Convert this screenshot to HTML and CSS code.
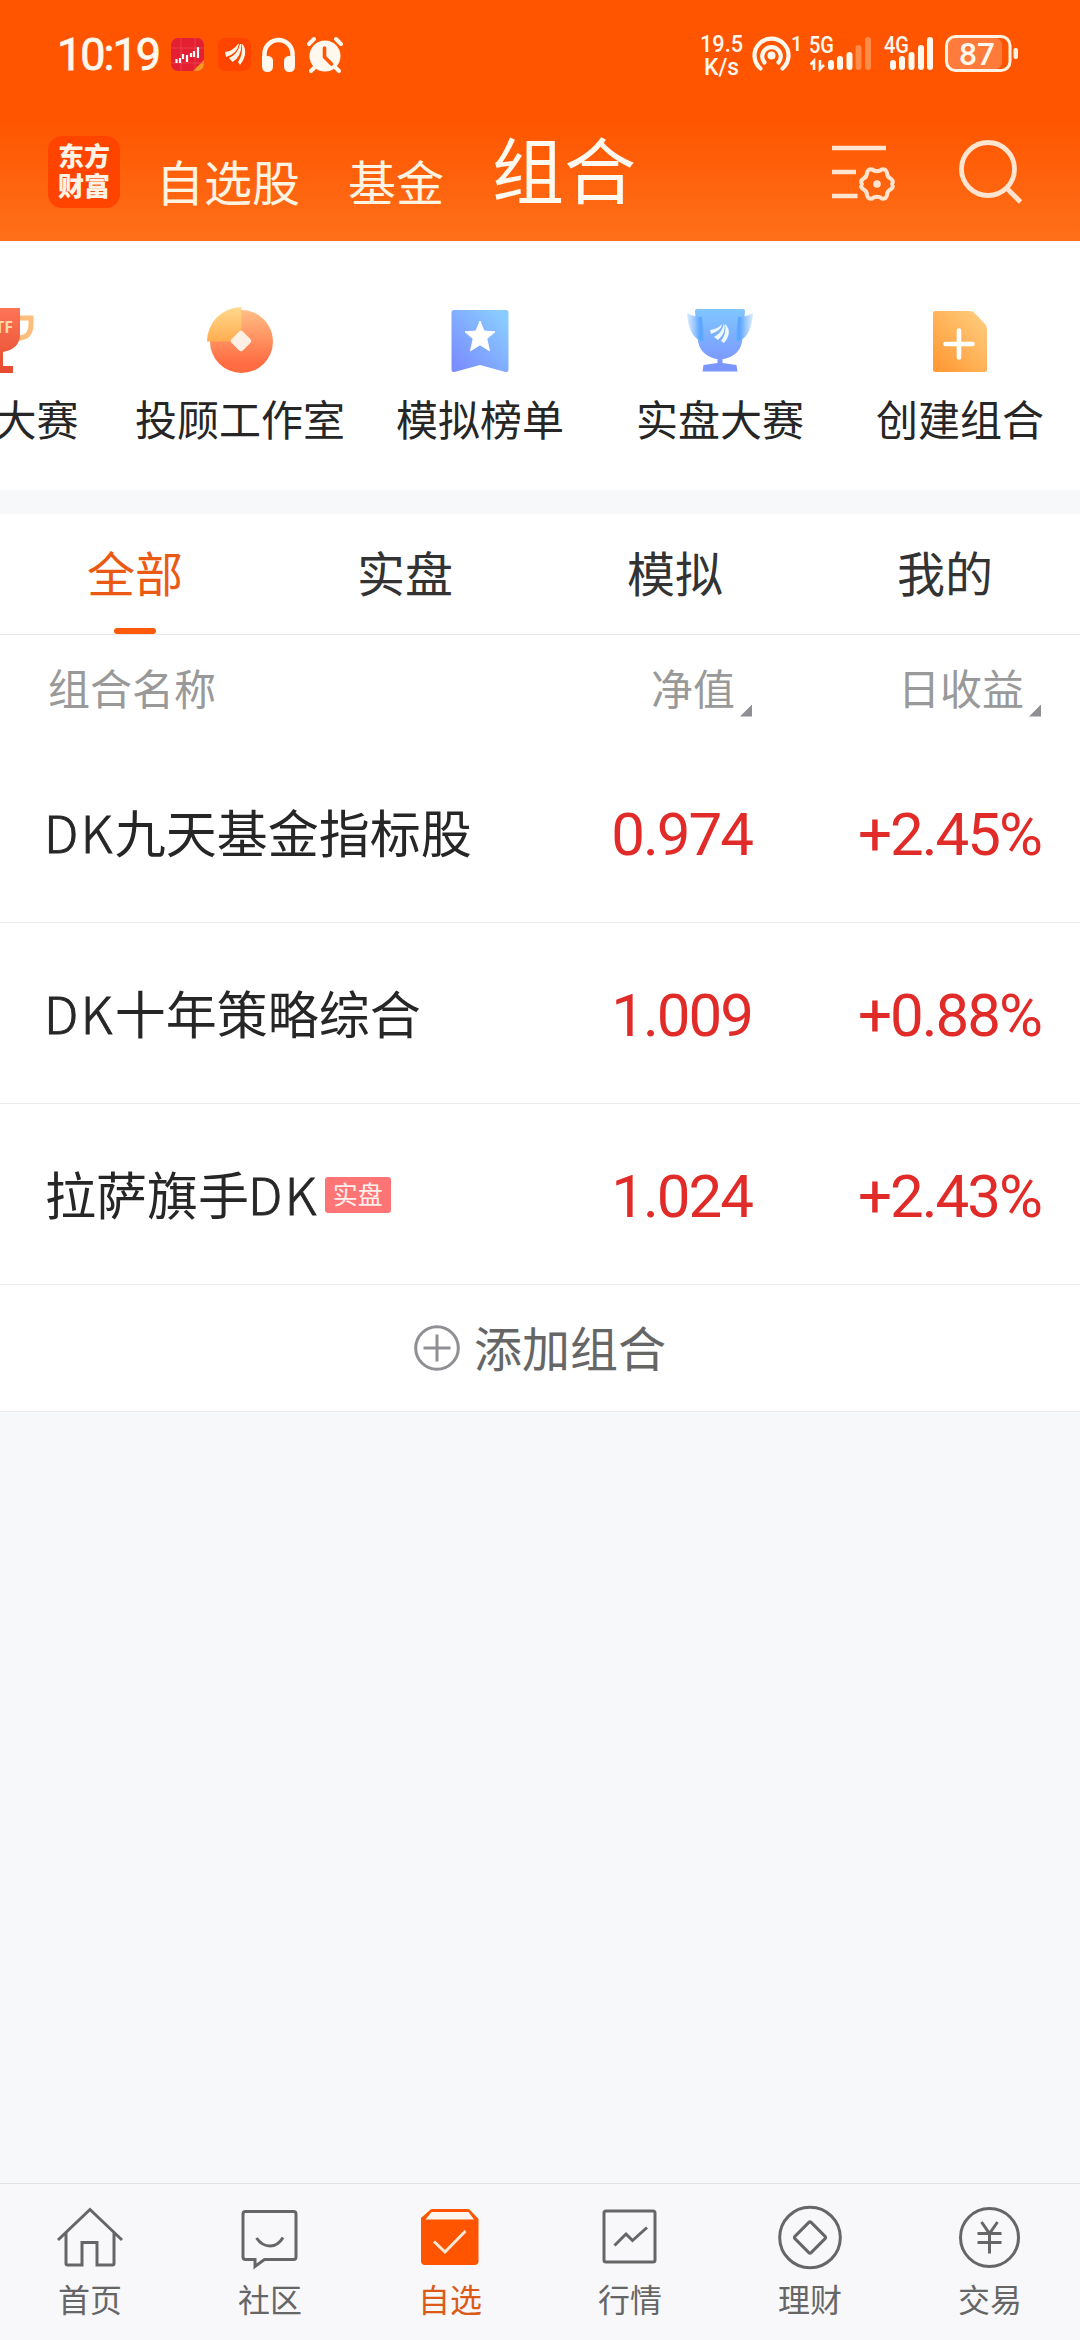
FILE: index.html
```html
<!DOCTYPE html>
<html lang="zh-CN">
<head>
<meta charset="utf-8">
<title>组合</title>
<link rel="stylesheet" href="styles.css">
</head>
<body>
<div class="app">
  <header class="top">
    <div class="status">
      <span class="clock">10:19</span>
      <svg class="status-left" width="176" height="40" viewBox="0 0 176 40">
        <rect x="2" y="4" width="33" height="33" rx="7" fill="#e41f33"/>
        <path d="M24 37l11-11v4a7 7 0 0 1-7 7z" fill="#f59a23"/>
        <path d="M2 14h33M2 29h33M12 4v33M26 4v33" stroke="#f04a50" stroke-width=".7"/>
        <path d="M7.500 25v4M11 24v5M14 20v5M18 21v7M22 19v4M25 17v6M29 13v11" stroke="#fff" stroke-width="2.2"/>
        <rect x="49" y="4" width="33" height="33" rx="7" fill="#ff4400"/>
        <g fill="#fff6e8"><path d="M56 18q8-1 13-8l1 0q-2 10-13 13z"/><path d="M60 24q9-4 11-14l1.500 0q0 13-9 18z"/><path d="M69 28q5-7 4-18q4 3 3 11q-1 5-5 10z"/></g>
        <path d="M95.500 29V20a14 14 0 0 1 28 0v9" fill="none" stroke="#fff8ee" stroke-width="4.500"/>
        <path d="M93 22h5q6 0 6 5v5q0 6-5.500 6t-5.500-6zM126 22h-5q-6 0-6 5v5q0 6 5.500 6t5.500-6z" fill="#fff8ee"/>
        <circle cx="156" cy="22" r="15.500" fill="#fff8ee"/>
        <path d="M140 10l5-5M172 10l-5-5M146 33l-4 4M166 33l4 4" stroke="#fff8ee" stroke-width="4" stroke-linecap="round"/>
        <path d="M155.500 14v9l7 7" fill="none" stroke="#ff5500" stroke-width="3.600" stroke-linecap="round" stroke-linejoin="round"/>
      </svg>
      <svg class="status-right" width="322" height="44" viewBox="698 32 322 44">
        <g class="tiny">
          <text x="700" y="52" textLength="43" lengthAdjust="spacingAndGlyphs" font-size="24">19.5</text>
          <text x="704" y="74.500" textLength="35" lengthAdjust="spacingAndGlyphs" font-size="24">K/s</text>
          <text x="791" y="51" font-size="20">1</text>
          <text x="809" y="53" textLength="25" lengthAdjust="spacingAndGlyphs" font-size="23">5G</text>
          <text x="884" y="53" textLength="25" lengthAdjust="spacingAndGlyphs" font-size="23">4G</text>
        </g>
        <g fill="none" stroke="#fff8ee" stroke-width="4.200" stroke-linecap="round">
          <path d="M760.500 68.500a17 17 0 1 1 22 0"/>
          <path d="M764.500 62.500a9.300 9.300 0 1 1 14 0"/>
        </g>
        <circle cx="771.500" cy="55.500" r="4" fill="#fff8ee"/>
        <path d="M814 70V61l-3.500 3.500M820 60v9l4-4" fill="none" stroke="#fff8ee" stroke-width="2.600"/>
        <g stroke="#fff8ee" stroke-width="6" stroke-linecap="round">
          <path d="M831 63v4M840 59v8M849.500 55v12"/>
          <path d="M858.500 48v19M868 40v27" stroke="#ff8b4a"/>
          <path d="M893 63v4M902 59v8M911.500 55v12M921 48v19M930 40v27"/>
        </g>
        <rect x="948" y="38" width="54" height="31" rx="7" fill="#ff7b3c"/>
        <rect x="946.500" y="36.500" width="63.500" height="34" rx="9" fill="none" stroke="#fff3e4" stroke-width="3"/>
        <rect x="1013.500" y="48" width="4.500" height="11" rx="2" fill="#fff3e4"/>
        <text class="charge" x="959" y="65" textLength="36" lengthAdjust="spacingAndGlyphs" font-size="32">87</text>
      </svg>
    </div>
    <nav class="bar">
      <div class="logo"><span>东方</span><span>财富</span></div>
      <a class="seg seg-first">自选股</a>
      <a class="seg">基金</a>
      <a class="seg seg-on">组合</a>
      <svg class="filter" width="76" height="76" viewBox="826 134 76 76" fill="none" stroke="#ffe4d0" stroke-width="4.600">
        <path d="M831 148h54M831 172h24M831 196h25.500"/>
        <path d="M871 169.500Q876 173 881 169.500Q885 168.500 886 173Q886 177 890 179Q893 181 891 184Q893 187 890 189Q886 191 886 195Q885 199.500 881 198.500Q876 195 871 198.500Q867 199.500 866 195Q866 191 862 189Q859 187 861 184Q859 181 862 179Q866 177 866 173Q867 168.500 871 169.500Z" stroke-width="4" stroke-linejoin="round"/>
        <circle cx="876" cy="184" r="3.800" fill="#ffe4d0" stroke="none"/>
      </svg>
      <svg class="search" width="76" height="76" viewBox="952 134 76 76" fill="none" stroke="#ffe4d0" stroke-width="4.800">
        <circle cx="987" cy="169" r="26.500"/><path d="M1005.500 188l14 14"/>
      </svg>
    </nav>
  </header>

  <section class="quick">
    <a class="entry">
      <svg width="80" height="80" viewBox="-40 300 80 80">
        <defs><linearGradient id="red" x1="0" y1="0" x2="0" y2="1"><stop offset="0" stop-color="#ff7557"/><stop offset="1" stop-color="#e64b2e"/></linearGradient></defs>
        <path d="M18 318h13v6q0 14-13 14M-18 318h-13v6q0 14 13 14" fill="none" stroke="#fdbd7c" stroke-width="5"/>
        <path d="M-20 308h40v26q0 15-17 18v14h10v7h-26v-7h10v-14q-17-3-17-18z" fill="url(#red)"/>
        <text x="-14" y="333" class="etf">ETF</text>
      </svg>
      <span>ETF大赛</span>
    </a>
    <a class="entry">
      <svg width="80" height="80" viewBox="200 300 80 80">
        <defs>
          <linearGradient id="coin" x1="0" y1="0" x2="0" y2="1"><stop offset="0" stop-color="#ffbd85"/><stop offset=".85" stop-color="#ff6c42"/></linearGradient>
          <linearGradient id="slice" x1="0" y1="0" x2="0" y2="1"><stop offset="0" stop-color="#ffd98f"/><stop offset="1" stop-color="#ffad4e"/></linearGradient>
        </defs>
        <circle cx="241.500" cy="341.500" r="31.500" fill="url(#coin)"/>
        <path d="M241.500 307v34.500H207A34.500 34.500 0 0 1 241.500 307z" fill="url(#slice)"/>
        <rect x="233" y="333" width="16" height="16" rx="3" transform="rotate(45 241 341)" fill="#fff0e6"/>
      </svg>
      <span>投顾工作室</span>
    </a>
    <a class="entry">
      <svg width="80" height="80" viewBox="440 300 80 80">
        <defs><linearGradient id="mark" x1=".1" y1=".9" x2=".9" y2=".1"><stop offset="0" stop-color="#7a8fff"/><stop offset="1" stop-color="#8accff"/></linearGradient></defs>
        <path d="M454 310h52q2.500 0 2.500 2.500v57q0 3-3 2.500L480 365l-25.500 7q-3 .5-3-2.500v-57q0-2.500 2.500-2.500z" fill="url(#mark)"/>
        <path d="M480 321l4 10 11 .8-8.200 7 2.700 12-9.500-6-9.500 6 2.700-12-8.200-7 11-.8z" fill="#fff" stroke="#fff" stroke-linejoin="round"/>
      </svg>
      <span>模拟榜单</span>
    </a>
    <a class="entry">
      <svg width="80" height="80" viewBox="680 300 80 80">
        <defs>
          <linearGradient id="cup" x1="0" y1="0" x2="0" y2="1"><stop offset="0" stop-color="#7fc6ff"/><stop offset=".9" stop-color="#7c96ff"/></linearGradient>
          <linearGradient id="wingl"><stop offset="0" stop-color="#cfe6ff" stop-opacity=".8"/><stop offset=".75" stop-color="#5aa4ff"/><stop offset="1" stop-color="#6fb2ff"/></linearGradient>
          <linearGradient id="wingr" x1="1" x2="0"><stop offset="0" stop-color="#cfe6ff" stop-opacity=".8"/><stop offset=".75" stop-color="#5aa4ff"/><stop offset="1" stop-color="#6fb2ff"/></linearGradient>
        </defs>
        <path d="M697 309h46q2 0 2 2l-2.500 27q-1 17-18.500 21h-1.500v4l14 2 1 6.500h-35l1-6.500 14-2v-4h-1.500q-17-4-18.500-21l-2.500-27q0-2 2-2z" fill="url(#cup)"/>
        <path d="M687 313q7 4 15 4l3 25q-16-2-18-29z" fill="url(#wingl)"/>
        <path d="M753 313q-7 4-15 4l-3 25q16-2 18-29z" fill="url(#wingr)"/>
        <g fill="#eef8ff"><path d="M710 330q8-1 12-6q0 6-11 10z"/><path d="M714 337q9-5 10-14q3 9-6 17z"/><path d="M721 341q6-8 4-17q5 4 3.500 11q-1 4-4.500 8z"/></g>
      </svg>
      <span>实盘大赛</span>
    </a>
    <a class="entry">
      <svg width="80" height="80" viewBox="920 300 80 80">
        <defs><linearGradient id="doc" x1=".1" y1=".95" x2=".9" y2=".1"><stop offset="0" stop-color="#ff9a36"/><stop offset="1" stop-color="#ffca7a"/></linearGradient></defs>
        <path d="M935.500 311h34q3 0 5 2l10.500 11q2 2 2 5v40.500q0 2.500-2.500 2.500h-49q-2.500 0-2.500-2.500v-56q0-2.500 2.500-2.500z" fill="url(#doc)"/>
        <path d="M945.500 344h27M959 330.500v27" stroke="#fff" stroke-width="4.600" stroke-linecap="round"/>
      </svg>
      <span>创建组合</span>
    </a>
  </section>

  <section class="panel">
    <div class="tabs">
      <a class="tab tab-on">全部</a><a class="tab">实盘</a><a class="tab">模拟</a><a class="tab">我的</a>
    </div>
    <div class="cols">
      <span class="c-name">组合名称</span>
      <span class="c-net">净值<i class="sort"></i></span>
      <span class="c-day">日收益<i class="sort"></i></span>
    </div>
    <div class="row"><span class="name"><span class="latin">DK</span>九天基金指标股</span><span class="num net">0.974</span><span class="num day">+2.45%</span></div>
    <div class="row"><span class="name"><span class="latin">DK</span>十年策略综合</span><span class="num net">1.009</span><span class="num day">+0.88%</span></div>
    <div class="row"><span class="name">拉萨旗手<span class="latin">DK</span><b class="badge">实盘</b></span><span class="num net">1.024</span><span class="num day">+2.43%</span></div>
    <a class="add">
      <svg width="46" height="46" viewBox="0 0 46 46" fill="none" stroke="#8f8f94" stroke-width="3"><circle cx="23" cy="23" r="21.300"/><path d="M9.500 23h27M23 9.500v27"/></svg>
      <span>添加组合</span>
    </a>
  </section>

  <nav class="dock">
    <a class="item">
      <svg width="72" height="72" viewBox="0 0 72 72"><path d="M4 40L36 9.500L68 40M12 33V63.500q0 1.500 1.500 1.500H28V42.500H43V65H58.500q1.500 0 1.500-1.500V33"/></svg>
      <span>首页</span>
    </a>
    <a class="item">
      <svg width="72" height="72" viewBox="0 0 72 72"><path d="M11.500 11.500h48q2.500 0 2.500 2.500v43q0 2.500-2.500 2.500H30.500L21 66.500V59.500h-9.500q-2.500 0-2.500-2.500V14q0-2.500 2.500-2.500z"/><path d="M22.500 38q5.500 8 13.500 8t13-8.500"/></svg>
      <span>社区</span>
    </a>
    <a class="item item-on">
      <svg width="72" height="72" viewBox="0 0 72 72"><path d="M7 18l9-8q1-1 2-1h36q1 0 2 1l8.500 9v42q0 4-4 4H11q-4 0-4-4z" fill="#ff5500" stroke="none"/><path d="M17.500 12h37l5.500 7.500H11.500z" fill="#fdf5f0" stroke="none"/><path d="M20 41.500l11 10.500 20.500-21" stroke="#ffe9d8"/></svg>
      <span>自选</span>
    </a>
    <a class="item">
      <svg width="72" height="72" viewBox="0 0 72 72"><rect x="10" y="11" width="51" height="51" rx="2"/><path d="M20.500 45.500L32 34l6.500 6.500L53 27.500"/></svg>
      <span>行情</span>
    </a>
    <a class="item">
      <svg width="72" height="72" viewBox="0 0 72 72"><circle cx="36" cy="37.500" r="30.300"/><rect x="24.500" y="26" width="23" height="23" rx="2" transform="rotate(45 36 37.500)"/></svg>
      <span>理财</span>
    </a>
    <a class="item">
      <svg width="72" height="72" viewBox="0 0 72 72"><circle cx="35.500" cy="37.500" r="29"/><path d="M27.500 22l8 11.500L43.500 22M23.500 33.500h24M23.500 42.500h24M35.500 33v20.500"/></svg>
      <span>交易</span>
    </a>
  </nav>
</div>
</body>
</html>
```
FILE: styles.css
```css
* { box-sizing: border-box; }

body {
  margin: 0;
  font-family: "Noto Sans CJK SC", "Noto Sans", sans-serif;
  background: #f7f8fa;
  color: #262626;
}

.app {
  display: flex;
  flex-direction: column;
  width: 1080px;
  height: 2340px;
  overflow: hidden;
}

/* Header */
.top {
  height: 241px;
  background: linear-gradient(#ff5500 0, #ff5500 118px, #ff6e18 235px);
}

.status {
  display: flex;
  align-items: center;
  height: 108px;
  padding-left: 57px;
}

.clock {
  width: 112px;
  padding-top: 2px;
  font: 400 45px/50px Roboto, sans-serif;
  -webkit-text-stroke: .8px #fff8ee;
  letter-spacing: -2px;
  color: #fff8ee;
}

.status-left { margin-top: -1px; }
.status-right { margin-left: 353px; overflow: visible; }

.tiny, .charge {
  font-family: Roboto, sans-serif;
  font-weight: 500;
  fill: #fff8ee;
}

.bar {
  display: flex;
  align-items: flex-start;
  height: 133px;
  padding: 26px 0 0 48px;
}

.logo {
  display: flex;
  flex-direction: column;
  align-items: center;
  width: 72px;
  height: 72px;
  margin-top: 2px;
  padding-top: 4px;
  border-radius: 14px;
  background: #ff4400;
  color: #fff3e6;
  font: 900 26px/30px "Noto Sans CJK SC", sans-serif;
}

.seg {
  margin: 16px 0 0 48px;
  font-size: 48px;
  line-height: 60px;
  color: #fff3e2;
}

.seg-first { margin-left: 36px; }
.seg-on { margin-top: -7px; font-size: 72px; line-height: 80px; color: #fffaf0; }
.filter { margin-left: 191px; }
.search { margin-left: 50px; }

/* Shortcut strip, scrolled so its first entry is half off screen */
.quick {
  display: flex;
  height: 249px;
  margin-left: -120px;
  width: 1200px;
  background: #fff;
}

.entry {
  display: flex;
  flex-direction: column;
  align-items: center;
  width: 240px;
  padding-top: 59px;
  font-size: 42px;
  line-height: 60px;
  white-space: nowrap;
}

.entry span { margin-top: 8px; }

.etf { font: 700 16px "Noto Sans", sans-serif; fill: #ffd9a8; }

/* Portfolio list */
.panel { margin-top: 24px; background: #fff; }

.tabs {
  display: flex;
  height: 121px;
  border-bottom: 1px solid #e8e8e8;
}

.tab {
  display: flex;
  flex-direction: column;
  align-items: center;
  width: 270px;
  font-size: 48px;
  line-height: 114px;
  color: #333;
}

.tab-on { color: #eb5a14; }

.tab-on::after {
  content: "";
  width: 42px;
  height: 6px;
  border-radius: 3px;
  background: #ff5a0a;
}

.cols, .row { display: flex; align-items: center; padding: 0 39px 0 45px; }

.cols {
  height: 107px;
  padding-left: 48px;
  font-size: 42px;
  line-height: 60px;
  color: #999;
}

.c-name, .name { flex: 1; }
.c-name { margin-top: -4px; }
.c-net, .c-day { display: flex; justify-content: flex-end; align-items: flex-end; margin-top: -4px; }
.c-day { width: 289px; }

.sort {
  width: 12px;
  height: 12px;
  margin: 0 0 0 5px;
  background: #8f8f94;
  clip-path: polygon(100% 0, 100% 100%, 0 100%);
}

.row {
  height: 181px;
  border-bottom: 1px solid #ebebeb;
}

.name { display: flex; align-items: center; margin-top: -2px; font-size: 51px; line-height: 70px; }

.latin {
  margin-left: -1px;
  letter-spacing: 2.4px;
  font-weight: 300;
  -webkit-text-stroke: .9px #262626;
}

.badge {
  width: 66px;
  height: 36px;
  margin: 4px 0 0 6px;
  border-radius: 3px;
  background: #ff7474;
  color: #fff0ee;
  font-size: 25px;
  font-weight: 400;
  line-height: 33px;
  text-align: center;
}

.num {
  padding-top: 6px;
  font: 400 60px/70px Roboto, sans-serif;
  letter-spacing: -2px;
  color: #e02b29;
  text-align: right;
}

.day { width: 289px; }

.add {
  display: flex;
  align-items: center;
  justify-content: center;
  height: 127px;
  border-bottom: 1px solid #ebebeb;
  font-size: 48px;
  line-height: 60px;
  color: #666;
}

.add span { margin: -5px 0 0 14px; }

/* Bottom navigation */
.dock {
  display: flex;
  height: 157px;
  margin-top: auto;
  border-top: 1px solid #e2e2e4;
  background: #f8f8fa;
}

.item {
  display: flex;
  flex-direction: column;
  align-items: center;
  width: 180px;
  padding-top: 16px;
  font-size: 32px;
  line-height: 40px;
  color: #666;
}

.item svg { fill: none; stroke: #666; stroke-width: 3; }
.item span { margin-top: 6px; }
.item-on { color: #dc5a18; }
```
